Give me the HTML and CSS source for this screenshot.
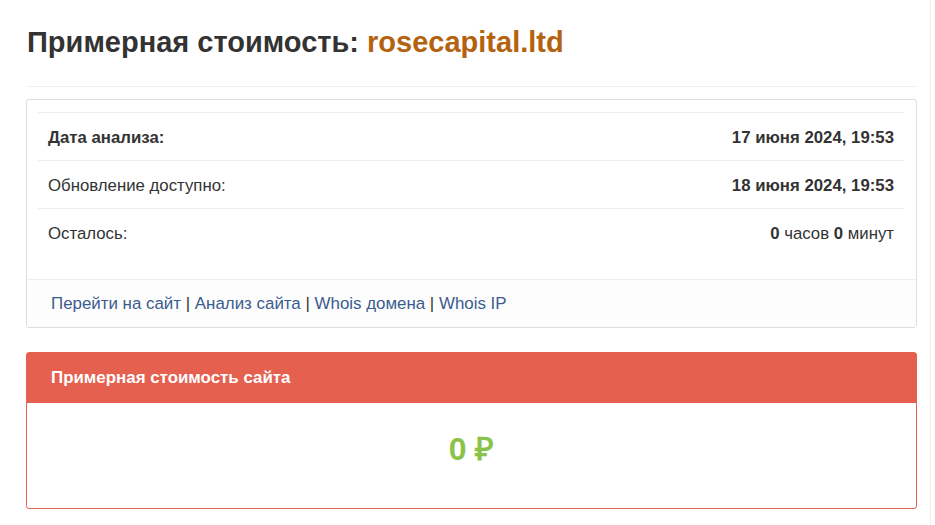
FILE: index.html
```html
<!DOCTYPE html>
<html lang="ru">
<head>
<meta charset="utf-8">
<title>Примерная стоимость: rosecapital.ltd</title>
<link rel="stylesheet" href="styles.css">
</head>
<body>
<div class="page">
  <h1 class="title">Примерная стоимость: <span class="domain">rosecapital.ltd</span></h1>
  <hr class="sep">
  <div class="panel">
    <div class="panel-body">
      <table class="info">
        <tr><td class="strong">Дата анализа:</td><td class="right strong">17 июня 2024, 19:53</td></tr>
        <tr><td>Обновление доступно:</td><td class="right strong">18 июня 2024, 19:53</td></tr>
        <tr><td>Осталось:</td><td class="right"><b>0</b> часов <b>0</b> минут</td></tr>
      </table>
    </div>
    <div class="panel-footer">
      <a href="#">Перейти на сайт</a> | <a href="#">Анализ сайта</a> | <a href="#">Whois домена</a> | <a href="#">Whois IP</a>
    </div>
  </div>
  <div class="panel panel-red">
    <div class="panel-heading">Примерная стоимость сайта</div>
    <div class="price-body"><span class="price">0 ₽</span></div>
  </div>
</div>
</body>
</html>
```
FILE: styles.css
```css
html, body {
  margin: 0;
  padding: 0;
  background: #fff;
}
body {
  font-family: "Liberation Sans", Arial, Helvetica, sans-serif;
  color: #333;
  font-size: 16px;
}
.page {
  width: 891px;
  padding: 22px 13px 15px 26px;
  border-right: 1px solid #ececec;
  min-height: 488px;
}
.title {
  margin: 0 0 0 1px;
  font-size: 29px;
  line-height: 40px;
  font-weight: bold;
  color: #333;
}
.domain {
  color: #b5620f;
}
.sep {
  border: 0;
  border-top: 1px solid #eee;
  margin: 24px 0 12px 1px;
}
.panel {
  border: 1px solid #ddd;
  border-radius: 3px;
  background: #fff;
  margin-bottom: 24px;
}
.panel-body {
  padding: 12px 12px 22px 11px;
}
.info {
  width: 100%;
  border-collapse: collapse;
}
.info td {
  border-top: 1px solid #eee;
  padding: 3px 10px 0;
  height: 48px;
  box-sizing: border-box;
  font-size: 16.8px;
  vertical-align: middle;
}
.right {
  text-align: right;
}
.strong {
  font-weight: bold;
}
.panel-footer {
  border-top: 1px solid #eee;
  background: #fdfdfd;
  padding: 0 24px;
  height: 47px;
  line-height: 47px;
  font-size: 16.9px;
  color: #333;
}
.panel-footer a {
  color: #3b5c8f;
  text-decoration: none;
}
.panel-red {
  border-color: #e36252;
}
.panel-heading {
  background: #e5604f;
  color: #fff;
  font-weight: bold;
  font-size: 16.9px;
  height: 50px;
  line-height: 50px;
  padding: 0 24px;
}
.price-body {
  height: 105px;
  padding-bottom: 16px;
  box-sizing: border-box;
  display: flex;
  align-items: center;
  justify-content: center;
}
.price {
  color: #8bc34a;
  font-weight: bold;
  font-size: 32px;
}
```
